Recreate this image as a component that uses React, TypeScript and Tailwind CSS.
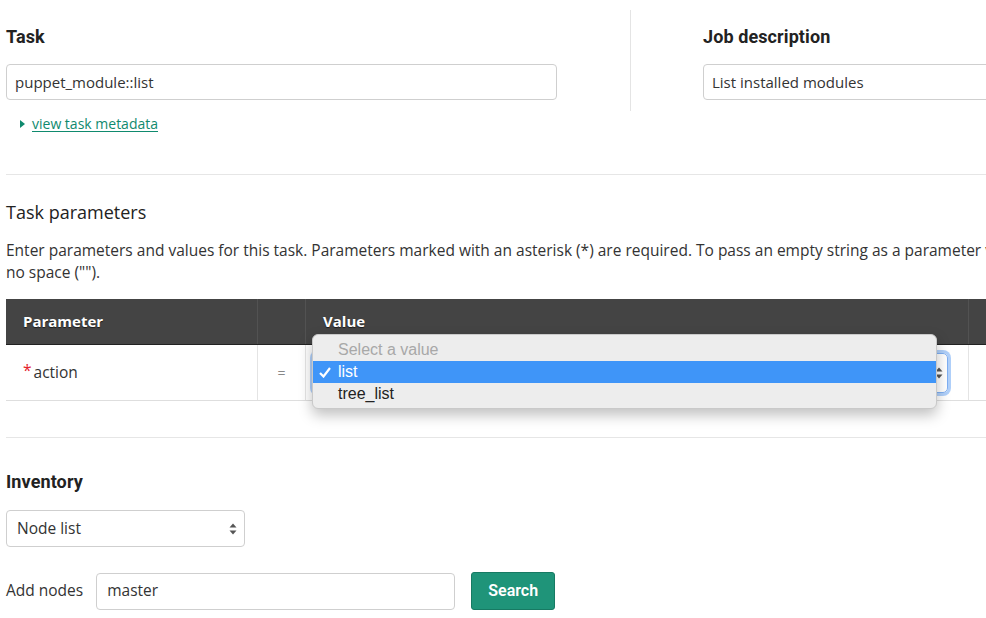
import React from 'react';

const heading = "font-['Roboto',sans-serif] text-[18px] leading-[24px] font-bold text-[#222] tracking-[0.1px]";
const body = "font-['Open_Sans',sans-serif]";

function UpDownArrows({ className = '' }: { className?: string }) {
  return (
    <svg width="8" height="12" viewBox="0 0 8 12" className={className}>
      <path d="M4 0.5 L7.5 4.5 L0.5 4.5 Z" fill="#555" />
      <path d="M4 11.5 L7.5 7.5 L0.5 7.5 Z" fill="#555" />
    </svg>
  );
}

export default function App() {
  const options = [
    { label: 'Select a value', muted: true },
    { label: 'list', selected: true },
    { label: 'tree_list' },
  ];

  return (
    <div className={`h-[618px] w-full overflow-hidden bg-white ${body}`}>
      <div className="w-[1260px] pl-[6px]">
        {/* Task / Job description */}
        <div className="flex pt-[10px]">
          <div className="w-[551px]">
            <h2 className={`mt-[15px] ${heading}`}>Task</h2>
            <div className="mt-[15px] h-[36px] rounded-[4px] border border-[#cfcfcf] px-[8px] flex items-center text-[15px] text-[#333]">
              puppet_module::list
            </div>
            <a href="#" className="mt-[14px] ml-[14px] flex items-center gap-[7px] text-[14px] leading-[20px] text-[#0f8a6e]">
              <svg width="5" height="8" viewBox="0 0 5 8">
                <path d="M0 0 L5 4 L0 8 Z" fill="#0f8a6e" />
              </svg>
              <span className="underline underline-offset-2">view task metadata</span>
            </a>
          </div>
          <div className="ml-[73px] h-[101px] border-l border-[#e4e4e4]" />
          <div className="pl-[72px] w-[624px]">
            <h2 className={`mt-[15px] ${heading}`}>Job description</h2>
            <div className="mt-[15px] h-[36px] rounded-[4px] border border-[#cfcfcf] px-[8px] flex items-center text-[15px] text-[#333]">
              List installed modules
            </div>
          </div>
        </div>

        <div className="mt-[40px] border-t border-[#e6e6e6]" />

        {/* Task parameters */}
        <h3 className="mt-[25px] text-[18px] leading-[24px] text-[#222]">Task parameters</h3>
        <p className="mt-[15px] text-[15.5px] leading-[22px] text-[#333] whitespace-nowrap">
          Enter parameters and values for this task. Parameters marked with an asterisk (*) are required. To pass an empty string as a parameter value, enter two double quotation marks with
          <br />
          no space ("").
        </p>

        <div className="relative mt-[16px]">
          {/* header */}
          <div className="flex h-[46px] bg-[#444] border-b border-[#222] text-white font-bold text-[15px]">
            <div className="w-[251px] flex items-center pl-[17px] [text-shadow:0_1px_1px_rgba(0,0,0,0.6)]">Parameter</div>
            <div className="w-[48px] border-l border-[#525252]" />
            <div className="w-[663px] border-l border-[#525252] flex items-center pl-[17px] [text-shadow:0_1px_1px_rgba(0,0,0,0.6)]">Value</div>
            <div className="flex-1 border-l border-[#525252]" />
          </div>
          {/* row */}
          <div className="flex h-[56px] border-b border-[#dedede] text-[15.5px]">
            <div className="w-[251px] flex items-center pl-[17px] text-[#333]">
              <span className="text-[#e5202a] mr-[2px] -mt-[4px]">*</span>action
            </div>
            <div className="w-[48px] border-l border-[#e4e4e4] flex items-center justify-center text-[#888] text-[14px]">=</div>
            <div className="w-[663px] border-l border-[#e4e4e4] flex items-center pl-[7px]">
              <div className="w-[635px] h-[40px] rounded-[5px] border border-[#7fb0f3] shadow-[0_0_0_3px_rgba(80,150,245,0.45)] flex items-center justify-end pr-[4px]">
                <UpDownArrows />
              </div>
            </div>
            <div className="flex-1 border-l border-[#e4e4e4]" />
          </div>

          {/* native dropdown popup */}
          <div className="absolute left-[306px] top-[35px] w-[625px] h-[75px] rounded-[6px] bg-[#ededed] border border-[#c9c9c9] shadow-[0_6px_14px_rgba(0,0,0,0.25)] pt-[4px] font-['Liberation_Sans',sans-serif] text-[16px]">
            {options.map((o) => (
              <div
                key={o.label}
                className={`relative h-[22px] flex items-center pl-[25px] ${
                  o.selected ? 'bg-[#3f95f8] text-white' : o.muted ? 'text-[#a8a8a8]' : 'text-[#222]'
                }`}
              >
                {o.selected && (
                  <svg width="12" height="11" viewBox="0 0 12 11" className="absolute left-[6px] top-[6px]">
                    <path d="M1 6 L4.5 9.5 L11 1" stroke="white" strokeWidth="2.2" fill="none" />
                  </svg>
                )}
                {o.label}
              </div>
            ))}
          </div>
        </div>

        <div className="mt-[36px] border-t border-[#e6e6e6]" />

        {/* Inventory */}
        <h2 className={`mt-[32px] ${heading}`}>Inventory</h2>
        <div className="mt-[16px] w-[239px] h-[37px] rounded-[4px] border border-[#cfcfcf] flex items-center justify-between pl-[10px] pr-[7px] text-[15.5px] text-[#333]">
          Node list
          <UpDownArrows />
        </div>

        <div className="mt-[25px] flex items-center">
          <span className="text-[15.5px] text-[#333]">Add nodes</span>
          <div className="ml-[13px] w-[359px] h-[37px] rounded-[4px] border border-[#cfcfcf] flex items-center pl-[10px] text-[15.5px] text-[#333]">
            master
          </div>
          <button className="ml-[16px] w-[84px] h-[38px] rounded-[3px] bg-[#1f9479] border border-[#177a63] text-white font-['Roboto',sans-serif] font-semibold text-[16px]">
            Search
          </button>
        </div>
      </div>
    </div>
  );
}
